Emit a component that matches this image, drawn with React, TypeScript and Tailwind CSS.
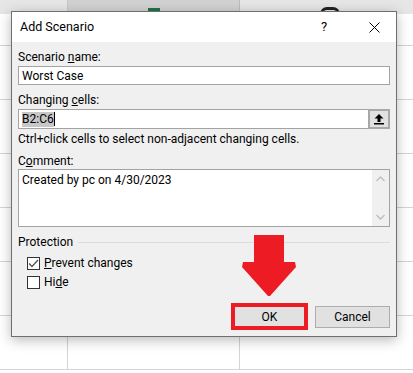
import React from "react";

const font = { fontFamily: 'Roboto, "Noto Sans", sans-serif' };

function Row({ h }: { h: number }) {
  return (
    <div className="flex border-b border-[#d4d4d4]" style={{ height: h }}>
      <div className="w-[68px] border-r border-[#d4d4d4]" />
      <div className="w-[172px] border-r border-[#d4d4d4]" />
      <div className="flex-1" />
    </div>
  );
}

export default function App() {
  return (
    <div className="relative w-[413px] h-[373px] overflow-hidden bg-white text-[12px] text-black" style={font}>
      {/* spreadsheet background */}
      <div className="flex flex-col">
        <div className="flex h-[14px]">
          <div className="w-[68px] bg-[#e6e6e6] border-r border-[#c8c8c8]" />
          <div className="w-[172px] bg-[#d2d2d2] border-r border-[#bdbdbd] relative">
            <div className="absolute left-[80px] top-[8px] w-[12px] h-[6px] bg-[#217346]" />
          </div>
          <div className="flex-1 bg-[#e6e6e6] relative">
            <div className="absolute left-[80px] top-[7px] w-[20px] h-[14px] rounded-full border-[3px] border-[#222]" />
          </div>
        </div>
        <Row h={32} />
        <Row h={54} />
        <Row h={54} />
        <Row h={54} />
        <Row h={54} />
        <Row h={54} />
        <Row h={54} />
      </div>

      {/* dialog */}
      <div className="absolute left-[11px] top-[11px] w-[386px] h-[326px] border border-[#6f6f6f] bg-[#f0f0f0] flex flex-col shadow-[0_3px_12px_rgba(0,0,0,0.28)]">
        <div className="h-[30px] bg-white flex items-center pl-[8px] shrink-0">
          <span className="flex-1 text-[12.5px]">Add Scenario</span>
          <span className="w-[10px] text-[13px] mr-[38px]">?</span>
          <svg width="11" height="11" viewBox="0 0 11 11" className="mr-[16px]">
            <path d="M0.5 0.5 L10.5 10.5 M10.5 0.5 L0.5 10.5" stroke="#000" strokeWidth="1" />
          </svg>
        </div>

        <div className="flex flex-col px-[6px]">
          <div className="h-[16px] leading-[16px] mt-[7px]">
            Scenario <u>n</u>ame:
          </div>
          <div className="h-[19px] mt-[1px] bg-white border border-[#a3a3a3] flex items-center pl-[3px]">
            Worst Case
          </div>

          <div className="h-[16px] leading-[16px] mt-[7px]">
            Changing <u>c</u>ells:
          </div>
          <div className="h-[20px] mt-[1px] bg-white border border-[#a3a3a3] flex items-center pl-[3px]">
            <span className="bg-[#c7c7c7] leading-[15px]">B2:C6</span>
            <span className="w-px h-[14px] bg-black" />
            <div className="flex-1" />
            <div className="w-[22px] h-[20px] -mr-px bg-[#e1e1e1] border-2 border-[#a8a8a8] flex items-center justify-center">
              <svg width="10" height="11" viewBox="0 0 10 11">
                <path d="M5 0 L9.5 4.5 L6.5 4.5 L6.5 8 L3.5 8 L3.5 4.5 L0.5 4.5 Z" fill="#000" />
                <rect x="0" y="9" width="10" height="1.5" fill="#000" />
              </svg>
            </div>
          </div>

          <div className="h-[16px] leading-[16px] mt-[2px]">
            Ctrl+click cells to select non-adjacent changing cells.
          </div>

          <div className="h-[16px] leading-[16px] mt-[6px]">
            C<u>o</u>mment:
          </div>
          <div className="h-[58px] bg-white border border-[#a3a3a3] flex">
            <div className="flex-1 pl-[3px] pt-[2px] leading-[16px]">Created by pc on 4/30/2023</div>
            <div className="w-[17px] bg-[#f0f0f0] flex flex-col items-center justify-between py-[6px]">
              <svg width="9" height="6" viewBox="0 0 9 6">
                <path d="M0.5 5 L4.5 1 L8.5 5" fill="none" stroke="#bdbdbd" strokeWidth="1.3" />
              </svg>
              <svg width="9" height="6" viewBox="0 0 9 6">
                <path d="M0.5 1 L4.5 5 L8.5 1" fill="none" stroke="#bdbdbd" strokeWidth="1.3" />
              </svg>
            </div>
          </div>

          <div className="h-[16px] leading-[16px] mt-[7px] flex items-center">
            <span>Protection</span>
            <div className="flex-1 h-px bg-[#dcdcdc] ml-[5px]" />
          </div>

          <div className="h-[16px] mt-[5px] flex items-center pl-[9px]">
            <div className="w-[13px] h-[13px] bg-white border border-[#333] flex items-center justify-center">
              <svg width="11" height="9" viewBox="0 0 11 9">
                <path d="M1 4.5 L4 7.5 L10 1" fill="none" stroke="#555" strokeWidth="1.3" />
              </svg>
            </div>
            <span className="ml-[4px] leading-[16px]">
              <u>P</u>revent changes
            </span>
          </div>
          <div className="h-[16px] mt-[3px] flex items-center pl-[9px]">
            <div className="w-[13px] h-[13px] bg-white border border-[#333]" />
            <span className="ml-[4px] leading-[16px]">
              Hi<u>d</u>e
            </span>
          </div>

          <div className="mt-[13px] flex items-center justify-end">
            <div className="w-[77px] h-[27px] border-4 border-[#ed1c24] bg-[#e1e1e1] flex items-center justify-center">
              OK
            </div>
            <div className="w-[75px] h-[22px] ml-[7px] border border-[#adadad] bg-[#e1e1e1] flex items-center justify-center">
              Cancel
            </div>
          </div>
        </div>
      </div>

      {/* red arrow annotation */}
      <svg className="absolute left-[242px] top-[235px]" width="55" height="62" viewBox="0 0 55 62">
        <polygon
          points="12,0 42,0 42,27 53,27 54,32 28,61 26,61 0,32 1,27 12,27"
          fill="#ed1c24"
        />
      </svg>
    </div>
  );
}
